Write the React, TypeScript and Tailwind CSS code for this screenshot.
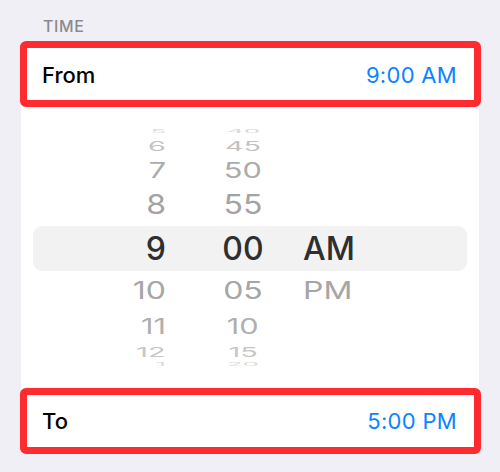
import React from "react";

type Row = {
  h: number;
  hour: string;
  min: string;
  ap?: string;
  sy: number;
  sx: number;
  color: string;
  center?: boolean;
};

const rows: Row[] = [
  { h: 6, hour: "5", min: "40", sy: 0.14, sx: 0.82, color: "#d9d9d9" },
  { h: 23, hour: "6", min: "45", sy: 0.41, sx: 0.9, color: "#c2c2c2" },
  { h: 27, hour: "7", min: "50", sy: 0.66, sx: 0.96, color: "#ababab" },
  { h: 42, hour: "8", min: "55", sy: 0.85, sx: 1, color: "#a3a3a3" },
  { h: 45, hour: "9", min: "00", ap: "AM", sy: 1, sx: 1, color: "#2f2f30", center: true },
  { h: 39, hour: "10", min: "05", ap: "PM", sy: 0.76, sx: 1, color: "#a6a6a6" },
  { h: 33, hour: "11", min: "10", sy: 0.65, sx: 0.96, color: "#afafaf" },
  { h: 18, hour: "12", min: "15", sy: 0.43, sx: 0.9, color: "#c6c6c6" },
  { h: 6, hour: "1", min: "20", sy: 0.14, sx: 0.82, color: "#dcdcdc" },
];

function WheelRow({ r }: { r: Row }) {
  const tf = { transform: `scale(${r.sx}, ${r.sy})`, color: r.color };
  return (
    <div
      className={
        "mx-[12px] flex items-center text-[32px] leading-[32px] " +
        (r.center ? "bg-[#f2f2f3] rounded-[9px] font-medium" : "font-normal")
      }
      style={{ height: r.h }}
    >
      <div className="w-[133px] flex justify-end">
        <span className="inline-block origin-right" style={tf}>
          {r.hour}
        </span>
      </div>
      <div className="ml-[37px] w-[80px] flex justify-center">
        <span className="inline-block" style={tf}>
          {r.min}
        </span>
      </div>
      <div className="ml-[20px] flex">
        {r.ap && (
          <span className="inline-block origin-left" style={tf}>
            {r.ap}
          </span>
        )}
      </div>
    </div>
  );
}

export default function App() {
  return (
    <div className="w-[500px] h-[472px] bg-[#f0eff5] flex flex-col font-['Inter','Liberation_Sans',sans-serif]">
      <div className="mt-[18px] ml-[43px] text-[16px] leading-[16px] font-medium text-[#8a8a8e] tracking-[0.6px]">
        TIME
      </div>
      <div className="mt-[7px] ml-[21px] w-[458px] bg-white flex flex-col">
        <div className="-ml-[1px] w-[461px] h-[66px] border-[7px] border-[#ff2b2f] rounded-[6px] flex items-center justify-between pl-[15px] pr-[17px] pt-[2px] bg-white">
          <span className="text-[22px] font-medium text-black">From</span>
          <span className="text-[22px] font-normal text-[#0a84ff] tracking-[0.3px]">9:00 AM</span>
        </div>
        <div className="h-[281px] flex flex-col pt-[21px]">
          {rows.map((r, i) => (
            <WheelRow key={i} r={r} />
          ))}
        </div>
        <div className="-ml-[1px] w-[461px] h-[66px] border-[7px] border-[#ff2b2f] rounded-[6px] flex items-center justify-between pl-[15px] pr-[17px] pt-[1px] bg-white">
          <span className="text-[22px] font-medium text-black">To</span>
          <span className="text-[22px] font-normal text-[#0a84ff] tracking-[0.3px]">5:00 PM</span>
        </div>
      </div>
    </div>
  );
}
